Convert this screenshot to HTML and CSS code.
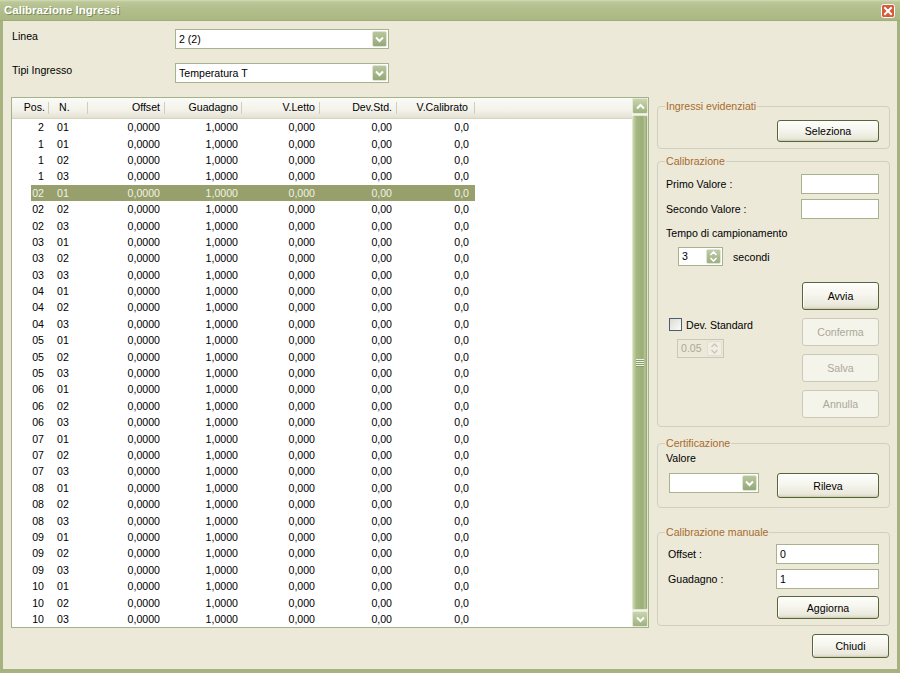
FILE: index.html
```html
<!DOCTYPE html>
<html lang="it">
<head>
<meta charset="utf-8">
<title>Calibrazione Ingressi</title>
<link rel="stylesheet" href="styles.css">
</head>
<body>
<div class="window">
  <header class="titlebar">
    <span class="title">Calibrazione Ingressi</span>
    <span class="close-btn"><svg width="14" height="14" viewBox="0 0 14 14"><rect x="0.5" y="0.5" width="13" height="13" rx="2" fill="#d65a3c" stroke="#fff"/><path d="M4 4L10 10M10 4L4 10" stroke="#fff" stroke-width="2" stroke-linecap="square"/></svg></span>
  </header>
  <div class="frame">
    <div class="top-fields">
      <div class="field">
        <span class="field-label">Linea</span>
        <div class="combo combo-top"><span class="combo-text">2 (2)</span><span class="dd"><svg width="9" height="7" viewBox="0 0 9 7"><path d="M1 1.5L4.5 5L8 1.5" fill="none" stroke="#fff" stroke-width="2"/></svg></span></div>
      </div>
      <div class="field">
        <span class="field-label">Tipi Ingresso</span>
        <div class="combo combo-top"><span class="combo-text">Temperatura T</span><span class="dd"><svg width="9" height="7" viewBox="0 0 9 7"><path d="M1 1.5L4.5 5L8 1.5" fill="none" stroke="#fff" stroke-width="2"/></svg></span></div>
      </div>
    </div>
    <div class="main">
      <div class="listview">
        <div class="lv">
          <div class="lv-head">
            <span class="hc">Pos.</span><span class="hc">N.</span><span class="hc">Offset</span><span class="hc">Guadagno</span><span class="hc">V.Letto</span><span class="hc">Dev.Std.</span><span class="hc">V.Calibrato</span><span class="hc hc-fill"></span>
          </div>
          <div class="lv-body">
            <div class="row"><span>2</span><span>01</span><span>0,0000</span><span>1,0000</span><span>0,000</span><span>0,00</span><span>0,0</span></div>
            <div class="row"><span>1</span><span>01</span><span>0,0000</span><span>1,0000</span><span>0,000</span><span>0,00</span><span>0,0</span></div>
            <div class="row"><span>1</span><span>02</span><span>0,0000</span><span>1,0000</span><span>0,000</span><span>0,00</span><span>0,0</span></div>
            <div class="row"><span>1</span><span>03</span><span>0,0000</span><span>1,0000</span><span>0,000</span><span>0,00</span><span>0,0</span></div>
            <div class="row sel"><span>02</span><span>01</span><span>0,0000</span><span>1,0000</span><span>0,000</span><span>0,00</span><span>0,0</span></div>
            <div class="row"><span>02</span><span>02</span><span>0,0000</span><span>1,0000</span><span>0,000</span><span>0,00</span><span>0,0</span></div>
            <div class="row"><span>02</span><span>03</span><span>0,0000</span><span>1,0000</span><span>0,000</span><span>0,00</span><span>0,0</span></div>
            <div class="row"><span>03</span><span>01</span><span>0,0000</span><span>1,0000</span><span>0,000</span><span>0,00</span><span>0,0</span></div>
            <div class="row"><span>03</span><span>02</span><span>0,0000</span><span>1,0000</span><span>0,000</span><span>0,00</span><span>0,0</span></div>
            <div class="row"><span>03</span><span>03</span><span>0,0000</span><span>1,0000</span><span>0,000</span><span>0,00</span><span>0,0</span></div>
            <div class="row"><span>04</span><span>01</span><span>0,0000</span><span>1,0000</span><span>0,000</span><span>0,00</span><span>0,0</span></div>
            <div class="row"><span>04</span><span>02</span><span>0,0000</span><span>1,0000</span><span>0,000</span><span>0,00</span><span>0,0</span></div>
            <div class="row"><span>04</span><span>03</span><span>0,0000</span><span>1,0000</span><span>0,000</span><span>0,00</span><span>0,0</span></div>
            <div class="row"><span>05</span><span>01</span><span>0,0000</span><span>1,0000</span><span>0,000</span><span>0,00</span><span>0,0</span></div>
            <div class="row"><span>05</span><span>02</span><span>0,0000</span><span>1,0000</span><span>0,000</span><span>0,00</span><span>0,0</span></div>
            <div class="row"><span>05</span><span>03</span><span>0,0000</span><span>1,0000</span><span>0,000</span><span>0,00</span><span>0,0</span></div>
            <div class="row"><span>06</span><span>01</span><span>0,0000</span><span>1,0000</span><span>0,000</span><span>0,00</span><span>0,0</span></div>
            <div class="row"><span>06</span><span>02</span><span>0,0000</span><span>1,0000</span><span>0,000</span><span>0,00</span><span>0,0</span></div>
            <div class="row"><span>06</span><span>03</span><span>0,0000</span><span>1,0000</span><span>0,000</span><span>0,00</span><span>0,0</span></div>
            <div class="row"><span>07</span><span>01</span><span>0,0000</span><span>1,0000</span><span>0,000</span><span>0,00</span><span>0,0</span></div>
            <div class="row"><span>07</span><span>02</span><span>0,0000</span><span>1,0000</span><span>0,000</span><span>0,00</span><span>0,0</span></div>
            <div class="row"><span>07</span><span>03</span><span>0,0000</span><span>1,0000</span><span>0,000</span><span>0,00</span><span>0,0</span></div>
            <div class="row"><span>08</span><span>01</span><span>0,0000</span><span>1,0000</span><span>0,000</span><span>0,00</span><span>0,0</span></div>
            <div class="row"><span>08</span><span>02</span><span>0,0000</span><span>1,0000</span><span>0,000</span><span>0,00</span><span>0,0</span></div>
            <div class="row"><span>08</span><span>03</span><span>0,0000</span><span>1,0000</span><span>0,000</span><span>0,00</span><span>0,0</span></div>
            <div class="row"><span>09</span><span>01</span><span>0,0000</span><span>1,0000</span><span>0,000</span><span>0,00</span><span>0,0</span></div>
            <div class="row"><span>09</span><span>02</span><span>0,0000</span><span>1,0000</span><span>0,000</span><span>0,00</span><span>0,0</span></div>
            <div class="row"><span>09</span><span>03</span><span>0,0000</span><span>1,0000</span><span>0,000</span><span>0,00</span><span>0,0</span></div>
            <div class="row"><span>10</span><span>01</span><span>0,0000</span><span>1,0000</span><span>0,000</span><span>0,00</span><span>0,0</span></div>
            <div class="row"><span>10</span><span>02</span><span>0,0000</span><span>1,0000</span><span>0,000</span><span>0,00</span><span>0,0</span></div>
            <div class="row"><span>10</span><span>03</span><span>0,0000</span><span>1,0000</span><span>0,000</span><span>0,00</span><span>0,0</span></div>
          </div>
        </div>
        <div class="vscroll">
          <span class="sb-btn"><svg width="9" height="7" viewBox="0 0 9 7"><path d="M1 5.5L4.5 2L8 5.5" fill="none" stroke="#fff" stroke-width="2"/></svg></span>
          <span class="sb-thumb"><span class="grip"></span></span>
          <span class="sb-btn"><svg width="9" height="7" viewBox="0 0 9 7"><path d="M1 1.5L4.5 5L8 1.5" fill="none" stroke="#fff" stroke-width="2"/></svg></span>
        </div>
      </div>
      <aside class="side">
        <fieldset class="group g1">
          <legend>Ingressi evidenziati</legend>
          <div class="end"><button class="btn b-102 h22">Seleziona</button></div>
        </fieldset>
        <fieldset class="group g2">
          <legend>Calibrazione</legend>
          <div class="vrow"><span>Primo Valore :</span><span class="input in-78"></span></div>
          <div class="vrow"><span>Secondo Valore :</span><span class="input in-78"></span></div>
          <div class="tempo">Tempo di campionamento</div>
          <div class="spin-row">
            <div class="spin"><span class="spin-text">3</span><span class="spin-btn"><svg width="9" height="13" viewBox="0 0 9 13"><path d="M1.5 5L4.5 2L7.5 5M1.5 8L4.5 11L7.5 8" fill="none" stroke="#fff" stroke-width="1.6"/></svg></span></div>
            <span>secondi</span>
          </div>
          <div class="lower">
            <div class="lower-left">
              <div class="chk-row"><span class="chk"></span><span>Dev. Standard</span></div>
              <div class="spin dis"><span class="spin-text">0.05</span><span class="spin-btn"><svg width="9" height="13" viewBox="0 0 9 13"><path d="M1.5 5L4.5 2L7.5 5M1.5 8L4.5 11L7.5 8" fill="none" stroke="#c8c6b6" stroke-width="1.4"/></svg></span></div>
            </div>
            <div class="btn-col">
              <button class="btn b-77">Avvia</button>
              <button class="btn b-77" disabled>Conferma</button>
              <button class="btn b-77" disabled>Salva</button>
              <button class="btn b-77" disabled>Annulla</button>
            </div>
          </div>
        </fieldset>
        <fieldset class="group g3">
          <legend>Certificazione</legend>
          <div class="valore">Valore</div>
          <div class="cert-row">
            <div class="combo combo-cert"><span class="combo-text"></span><span class="dd"><svg width="9" height="7" viewBox="0 0 9 7"><path d="M1 1.5L4.5 5L8 1.5" fill="none" stroke="#fff" stroke-width="2"/></svg></span></div>
            <button class="btn b-102 h25">Rileva</button>
          </div>
        </fieldset>
        <fieldset class="group g4">
          <legend>Calibrazione manuale</legend>
          <div class="vrow"><span>Offset :</span><span class="input in-103">0</span></div>
          <div class="vrow"><span>Guadagno :</span><span class="input in-103">1</span></div>
          <div class="end aggiorna"><button class="btn b-102 h23">Aggiorna</button></div>
        </fieldset>
      </aside>
    </div>
    <div class="footer"><button class="btn b-close">Chiudi</button></div>
  </div>
</div>
</body>
</html>
```

FILE: styles.css
```css
* { box-sizing: border-box; }
html, body { margin: 0; padding: 0; }
body {
  width: 900px; height: 673px; overflow: hidden;
  background: #ece9d8;
  font-family: "Liberation Sans", Arial, sans-serif;
  font-size: 10.6px; color: #000;
}
.window { width: 900px; height: 673px; display: flex; flex-direction: column; }
.titlebar {
  height: 21px; flex: none;
  display: flex; align-items: center; justify-content: space-between;
  padding: 0 5px 0 4px;
  background: linear-gradient(#d3dab5 0, #bcc799 2px, #b3bf8d 40%, #aab883 100%);
  border-bottom: 1px solid #9fad78;
}
.title { color: #fff; font-weight: bold; font-size: 11.5px; text-shadow: 1px 1px 0 #7f8c5c; }
.close-btn { display: flex; width: 14px; height: 14px; margin-top: 1px; }
.frame {
  flex: 1; display: flex; flex-direction: column;
  background: #ece9d8;
  border-style: solid; border-color: #a6b381; border-width: 0 3px 4px 3px;
  padding: 0 7px 0 8px;
}
.top-fields { display: flex; flex-direction: column; gap: 14px; padding-top: 8px; margin-bottom: 14px; }
.field { display: flex; align-items: flex-start; height: 20px; }
.field-label { width: 164px; padding-left: 1px; padding-top: 1px; line-height: 13px; }
.combo { display: flex; height: 20px; background: #fff; border: 1px solid #a7b28f; padding: 1px; }
.combo-top { width: 214px; }
.combo-cert { width: 90px; margin-left: 3px; }
.combo-text { flex: 1; padding-left: 2px; line-height: 16px; }
.dd {
  width: 15px; display: flex; align-items: center; justify-content: center;
  border-radius: 2px; border: 1px solid #dfe5d0;
  background: linear-gradient(#b9c69d, #95a878);
}
.main { display: flex; gap: 8px; height: 531px; flex: none; }
.listview { width: 638px; display: flex; border: 1px solid #a5b08c; background: #fff; }
.lv { flex: 1; display: flex; flex-direction: column; min-width: 0; }
.lv-head {
  height: 21px; flex: none; display: grid;
  grid-template-columns: 37px 39px 77px 77px 78px 77px 78px 1fr;
  background: linear-gradient(#fbfbf7, #f2f1e9 65%, #e4e1d1);
  border-bottom: 1px solid #d6d3c1;
}
.hc {
  text-align: right; padding-right: 5px; line-height: 19px;
  background: linear-gradient(#d0cdbc, #d0cdbc) right 4px / 1px 12px no-repeat;
}
.hc:nth-child(1) { padding-right: 4px; }
.hc:nth-child(2) { text-align: left; padding-left: 10px; }
.hc:nth-child(4) { padding-right: 4px; }
.hc:nth-child(7) { padding-right: 7px; }
.hc-fill { background: none; }
.lv-body { flex: 1; display: flex; flex-direction: column; }
.row {
  flex: 1; display: grid; width: 463px; align-items: center;
  grid-template-columns: 37px 39px 77px 77px 78px 77px 78px;
}
.row span { text-align: right; padding-right: 5px; }
.row span:nth-child(2) { text-align: left; padding-left: 8px; padding-right: 0; }
.row span:nth-child(4) { padding-right: 4px; }
.row span:nth-child(7) { padding-right: 6px; }
.row.sel { background: linear-gradient(to right, transparent 19px, #979f6d 19px); color: #f0f2e2; }
.vscroll { width: 16px; flex: none; display: flex; flex-direction: column; background: #f4f3ec; }
.sb-btn {
  height: 16px; flex: none; display: flex; align-items: center; justify-content: center;
  border-radius: 2px; border: 1px solid #e4ead6;
  background: linear-gradient(#c8d4ae, #9fb27f);
}
.sb-thumb {
  flex: 1; margin: 1px 0; border-radius: 2px;
  display: flex; align-items: center; justify-content: center;
  border: 1px solid #dfe7cc;
  background: linear-gradient(to right, #c9d6ae, #a5b883 25%, #9bae76 70%, #b6c598 85%, #8fa16c);
}
.grip { width: 8px; height: 8px; background: repeating-linear-gradient(#eef2e2 0 1px, #8a9b68 1px 2px); }
.side { width: 233px; display: flex; flex-direction: column; padding-top: 3px; }
.group { margin: 0; border: 1px solid #d0d0bf; border-radius: 4px; min-width: 0; }
.group legend { color: #a86b2f; padding: 0 1px; margin-left: -1px; line-height: 13px; }
.g1 { padding: 7px 10px 6px 8px; }
.g2 { margin-top: 6px; padding: 6px 10px 8px 8px; }
.g3 { margin-top: 10px; padding: 2px 10px 9px 8px; }
.g4 { margin-top: 18px; padding: 5px 10px 6px 10px; }
.g4 legend { margin-left: -3px; }
.end { display: flex; justify-content: flex-end; }
.vrow { display: flex; justify-content: space-between; align-items: center; }
.vrow + .vrow { margin-top: 5px; }
.input { height: 20px; background: #fff; border: 1px solid #a7b28f; padding: 0 3px; line-height: 18px; }
.in-78 { width: 78px; }
.in-103 { width: 103px; }
.tempo { margin-top: 8px; line-height: 13px; }
.spin-row { margin-top: 7px; margin-left: 12px; display: flex; align-items: center; gap: 10px; }
.spin { width: 45px; height: 19px; display: flex; background: #fff; border: 1px solid #a7b28f; padding: 1px; }
.spin-text { flex: 1; padding-left: 2px; line-height: 15px; }
.spin-btn {
  width: 15px; display: flex; align-items: center; justify-content: center;
  border-radius: 2px; border: 1px solid #dfe5d0;
  background: linear-gradient(#c0cba8, #9dae84);
}
.spin.dis { width: 47px; margin-top: 8px; margin-left: 8px; background: transparent; border-color: #cac8b9; color: #aca899; }
.spin.dis .spin-btn { background: #f1efe4; border-color: #e2e0d3; }
.lower { margin-top: 16px; display: flex; justify-content: space-between; }
.lower-left { padding-top: 36px; padding-left: 3px; }
.chk-row { display: flex; align-items: center; gap: 4px; height: 13px; }
.chk { width: 13px; height: 13px; border: 1px solid #4c5d73; background: linear-gradient(135deg, #dcdbd2, #fbfbf8); }
.btn-col { display: flex; flex-direction: column; gap: 8px; }
.btn {
  font: inherit; color: #000; padding: 0; margin: 0;
  border: 1px solid #56663a; border-radius: 3px;
  background: linear-gradient(#fefefb, #f6f5ee 45%, #ebe9dc 85%, #d9d6c2);
  box-shadow: inset 0 -1px 0 #d2cfb9, inset 1px 1px 0 #fff;
}
.btn:disabled { border-color: #cac8b9; color: #aca899; background: #f5f4ea; box-shadow: none; }
.b-77 { width: 77px; height: 28px; }
.b-102 { width: 102px; }
.h22 { height: 22px; }
.h23 { height: 23px; }
.h25 { height: 25px; }
.valore { line-height: 13px; }
.cert-row { margin-top: 8px; display: flex; justify-content: space-between; align-items: flex-start; }
.aggiorna { margin-top: 7px; }
.footer { margin-top: 6px; display: flex; justify-content: flex-end; padding-right: 1px; }
.b-close { width: 77px; height: 24px; }
```
